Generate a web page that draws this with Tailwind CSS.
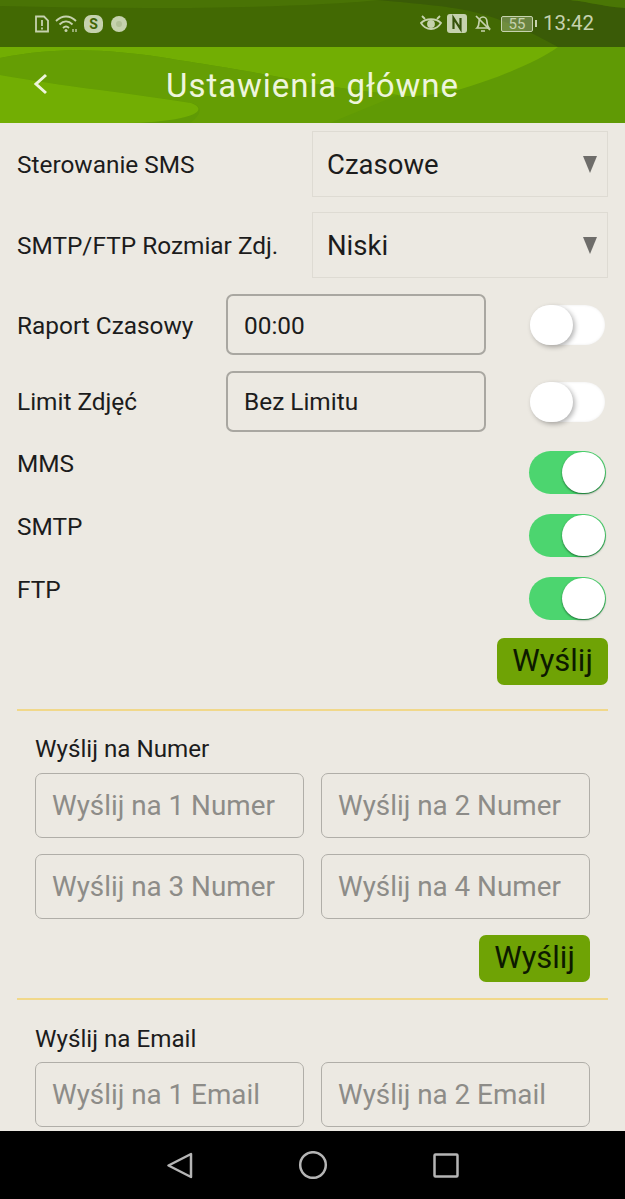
<!DOCTYPE html>
<html lang="pl">
<head>
  <meta charset="UTF-8" />
  <title>Ustawienia główne</title>
  <script src="https://cdn.jsdelivr.net/npm/@tailwindcss/browser@4"></script>
</head>
<body class="bg-[#ece9e2] font-['Roboto',sans-serif] text-[#1c1c1c]">
  <div class="w-[625px] h-[1199px] flex flex-col overflow-hidden">

    <!-- header: status bar + title bar share one wavy background -->
    <header class="relative h-[123px] shrink-0 overflow-hidden bg-[#609a05]">
      <svg class="absolute inset-0" width="625" height="123" viewBox="0 0 625 123">
        <rect width="625" height="47" fill="#426903"/>
        <path d="M0 0H378C300 8 150 10 0 6Z" fill="#497305"/>
        <path d="M378 0C420 4 450 6 478 13C510 22 535 34 558 47H625V8C600 6 590 2 570 0Z" fill="#3a5b07"/>
        <path d="M570 0H625V8C600 6 590 2 570 0Z" fill="#4a7605"/>
        <path d="M0 47H558C540 60 500 78 458 90C420 98 400 96 398 95C350 90 320 85 279 77C220 66 190 62 160 57C110 50 60 46 0 58Z" fill="#72ae03"/>
        <path d="M0 58C60 46 110 50 160 57C190 62 220 66 279 77C320 85 350 90 398 95L330 123H190C205 112 200 105 191 103C160 98 130 94 100 90C60 85 30 80 0 75Z" fill="#659e04"/>
        <path d="M0 75C30 80 60 85 100 90C130 94 160 98 191 103C205 108 200 116 170 120C150 123 130 123 110 123H0Z" fill="#72ae03"/>
      </svg>

      <!-- status bar -->
      <div class="relative h-[47px] flex items-center justify-between pl-[34px] pr-[31px] text-[#c6d2ae]">
        <div class="flex items-center gap-[5px]">
          <svg width="16" height="18" viewBox="0 0 16 18" fill="none" stroke="currentColor" stroke-width="1.800"><path d="M2 1.500H10L14 5.500V16.500H2Z"/><path d="M8 5V11M8 12.500V14.500"/></svg>
          <svg width="24" height="18" viewBox="0 0 24 18" fill="none" stroke="currentColor" stroke-width="1.800"><path d="M1 6C7 0 15 0 21 6M4.500 9.500C8.500 5.500 13.500 5.500 17.500 9.500M8 13C10 11 12 11 14 13"/><circle cx="11" cy="15.500" r="1.500" fill="currentColor" stroke="none"/><path d="M18 14V17M21 14V17" stroke-width="1.300"/></svg>
          <span class="w-[19px] h-[18px] rounded-[7px] bg-[#c6d2ae] text-[#3f6404] text-[14px] font-bold leading-[18px] text-center">S</span>
          <span class="ml-[3px] w-[16px] h-[16px] rounded-full bg-[#c6d2ae] flex items-center justify-center"><span class="w-[6px] h-[6px] rounded-full bg-[#b3c198]"></span></span>
        </div>
        <div class="flex items-center">
          <svg width="22" height="19" viewBox="0 0 22 19" fill="none" stroke="currentColor" stroke-width="1.800"><path d="M1 9C6 4 16 4 21 9C16 17 6 17 1 9Z"/><circle cx="11" cy="10" r="3" fill="currentColor"/><path d="M2 2L5 5M20 2L17 5"/></svg>
          <svg class="ml-[5px]" width="20" height="19" viewBox="0 0 20 19"><rect width="20" height="19" rx="3" fill="currentColor"/><path d="M6.500 15V4L13.500 15V4" fill="none" stroke="#35520a" stroke-width="2.200"/></svg>
          <svg class="ml-[7px]" width="18" height="19" viewBox="0 0 18 19" fill="none" stroke="currentColor" stroke-width="1.700"><path d="M3 14C5 12 5 10 5 8C5 5 7 3 9 3C11 3 13 5 13 8C13 10 13 12 15 14Z"/><path d="M7 17H11M2 2L16 16"/></svg>
          <span class="ml-[9px] w-[32px] h-[16px] border border-current rounded-[2px] bg-[#c6d2ae]/35 text-[15px] leading-[14px] text-center">55</span>
          <span class="ml-[2px] w-[2px] h-[7px] bg-current"></span>
          <span class="ml-[6px] text-[20.5px] leading-none">13:42</span>
        </div>
      </div>

      <!-- title bar -->
      <div class="relative h-[76px] flex items-center justify-center text-[#eef5dc]">
        <svg class="absolute left-[33px] top-[26px]" width="16" height="22" viewBox="0 0 16 22" fill="none" stroke="currentColor" stroke-width="3"><path d="M13 2L3 11L13 20"/></svg>
        <h1 class="text-[33px] leading-none tracking-[0.95px] font-normal">Ustawienia główne</h1>
      </div>
    </header>

    <main class="flex-1 overflow-hidden px-[17px]">
      <div class="mt-[8px] flex items-center justify-between">
        <span class="pt-[2px] text-[24.4px]">Sterowanie SMS</span>
        <div class="w-[296px] h-[66px] border border-[#dedbd3] flex items-center justify-between pl-[14px] pr-[10px] pt-[1px] text-[27.5px]">
          Czasowe
          <span class="w-0 h-0 border-x-[7px] border-x-transparent border-t-[17px] border-t-[#6e6d6a]"></span>
        </div>
      </div>
      <div class="mt-[15px] flex items-center justify-between">
        <span class="pt-[2px] text-[24.4px]">SMTP/FTP Rozmiar Zdj.</span>
        <div class="w-[296px] h-[66px] border border-[#dedbd3] flex items-center justify-between pl-[14px] pr-[10px] pt-[1px] text-[27.5px]">
          Niski
          <span class="w-0 h-0 border-x-[7px] border-x-transparent border-t-[17px] border-t-[#6e6d6a]"></span>
        </div>
      </div>

      <div class="mt-[16px] flex items-center h-[61px]">
        <span class="w-[209px] pt-[3px] text-[24.4px]">Raport Czasowy</span>
        <div class="w-[260px] h-[61px] border-2 border-[#a9a7a1] rounded-[7px] flex items-center pl-[16px] pt-[3px] text-[24.4px]">00:00</div>
        <div class="ml-auto mr-[3px] relative w-[75px] h-[40px] rounded-full bg-white shadow-[inset_0_0_3px_rgba(0,0,0,0.08)]">
          <span class="absolute left-0 top-0 w-[43px] h-[40px] rounded-full bg-white shadow-[2px_2px_5px_rgba(0,0,0,0.3)]"></span>
        </div>
      </div>
      <div class="mt-[16px] flex items-center h-[61px]">
        <span class="w-[209px] pt-[2px] text-[24.4px]">Limit Zdjęć</span>
        <div class="w-[260px] h-[61px] border-2 border-[#a9a7a1] rounded-[7px] flex items-center pl-[16px] pt-[2px] text-[24.4px]">Bez Limitu</div>
        <div class="ml-auto mr-[3px] relative w-[75px] h-[40px] rounded-full bg-white shadow-[inset_0_0_3px_rgba(0,0,0,0.08)]">
          <span class="absolute left-0 top-0 w-[43px] h-[40px] rounded-full bg-white shadow-[2px_2px_5px_rgba(0,0,0,0.3)]"></span>
        </div>
      </div>

      <div class="mt-[19px] flex justify-between h-[43px]">
        <span class="text-[24.4px] leading-[26px]">MMS</span>
        <div class="mr-[2px] relative w-[77px] h-[43px] rounded-full bg-[#4cd56f]">
          <span class="absolute right-[1px] top-[1px] w-[43px] h-[41px] rounded-full bg-white shadow-[0_1px_2px_rgba(0,60,20,0.7)]"></span>
        </div>
      </div>
      <div class="mt-[20px] flex justify-between h-[43px]">
        <span class="text-[24.4px] leading-[26px]">SMTP</span>
        <div class="mr-[2px] relative w-[77px] h-[43px] rounded-full bg-[#4cd56f]">
          <span class="absolute right-[1px] top-[1px] w-[43px] h-[41px] rounded-full bg-white shadow-[0_1px_2px_rgba(0,60,20,0.7)]"></span>
        </div>
      </div>
      <div class="mt-[20px] flex justify-between h-[43px]">
        <span class="text-[24.4px] leading-[26px]">FTP</span>
        <div class="mr-[2px] relative w-[77px] h-[43px] rounded-full bg-[#4cd56f]">
          <span class="absolute right-[1px] top-[1px] w-[43px] h-[41px] rounded-full bg-white shadow-[0_1px_2px_rgba(0,60,20,0.7)]"></span>
        </div>
      </div>

      <div class="mt-[18px] flex justify-end">
        <button class="w-[111px] h-[47px] rounded-[7px] bg-[#6fa305] text-[31px] text-[#0d1a00]">Wyślij</button>
      </div>

      <div class="mt-[24px] h-[2px] bg-[#f1d88a]"></div>

      <section class="px-[18px]">
        <h2 class="mt-[25px] text-[24.2px] leading-[26px] font-normal">Wyślij na Numer</h2>
        <div class="mt-[11px] grid grid-cols-[269px_269px] gap-x-[17px] gap-y-[16px]">
          <div class="h-[65px] border-[1.5px] border-[#b0aea8] rounded-[7px] flex items-center pl-[16px] pt-[1px] text-[27.8px] text-[#8d8c88]">Wyślij na 1 Numer</div>
          <div class="h-[65px] border-[1.5px] border-[#b0aea8] rounded-[7px] flex items-center pl-[16px] pt-[1px] text-[27.8px] text-[#8d8c88]">Wyślij na 2 Numer</div>
          <div class="h-[65px] border-[1.5px] border-[#b0aea8] rounded-[7px] flex items-center pl-[16px] pt-[1px] text-[27.8px] text-[#8d8c88]">Wyślij na 3 Numer</div>
          <div class="h-[65px] border-[1.5px] border-[#b0aea8] rounded-[7px] flex items-center pl-[16px] pt-[1px] text-[27.8px] text-[#8d8c88]">Wyślij na 4 Numer</div>
        </div>
        <div class="mt-[16px] flex justify-end">
          <button class="w-[111px] h-[47px] rounded-[7px] bg-[#6fa305] text-[31px] text-[#0d1a00]">Wyślij</button>
        </div>
      </section>

      <div class="mt-[16px] h-[2px] bg-[#f1d88a]"></div>

      <section class="px-[18px]">
        <h2 class="mt-[26px] text-[24.2px] leading-[26px] font-normal">Wyślij na Email</h2>
        <div class="mt-[10px] grid grid-cols-[269px_269px] gap-x-[17px]">
          <div class="h-[65px] border-[1.5px] border-[#b0aea8] rounded-[7px] flex items-center pl-[16px] pt-[1px] text-[27.8px] text-[#8d8c88]">Wyślij na 1 Email</div>
          <div class="h-[65px] border-[1.5px] border-[#b0aea8] rounded-[7px] flex items-center pl-[16px] pt-[1px] text-[27.8px] text-[#8d8c88]">Wyślij na 2 Email</div>
        </div>
      </section>
    </main>

    <nav class="h-[68px] shrink-0 bg-black flex items-center justify-center gap-[105px] text-[#b5b5b5]">
      <svg width="26" height="27" viewBox="0 0 26 27" fill="none" stroke="currentColor" stroke-width="2.500" stroke-linejoin="round"><path d="M24 2V25L1.500 13.500Z"/></svg>
      <svg width="30" height="28" viewBox="0 0 30 28" fill="none" stroke="currentColor" stroke-width="2.500"><circle cx="15" cy="14" r="12.800"/></svg>
      <svg width="26" height="25" viewBox="0 0 26 25" fill="none" stroke="currentColor" stroke-width="2.500" stroke-linejoin="round"><rect x="1.500" y="1.500" width="23" height="22" rx="1"/></svg>
    </nav>
  </div>
</body>
</html>
